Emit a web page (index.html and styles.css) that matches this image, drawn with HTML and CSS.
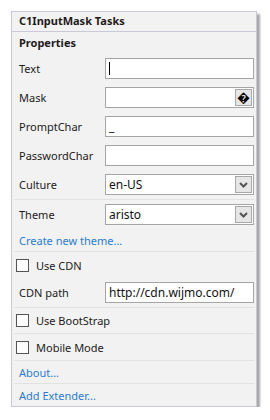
FILE: index.html
```html
<!DOCTYPE html>
<html>
<head>
<meta charset="utf-8">
<link rel="stylesheet" href="styles.css">
</head>
<body>
<div class="panel">
  <div class="header">C1InputMask Tasks</div>
  <div class="section-title">Properties</div>
  <div class="row field">
    <span class="label">Text</span>
    <div class="box"><span class="caret"></span></div>
  </div>
  <div class="row field">
    <span class="label">Mask</span>
    <div class="box"><span class="value"></span><span class="btn mask-btn">&#xFFFD;</span></div>
  </div>
  <div class="row field">
    <span class="label">PromptChar</span>
    <div class="box"><span class="value">_</span></div>
  </div>
  <div class="row field">
    <span class="label">PasswordChar</span>
    <div class="box"></div>
  </div>
  <div class="row field sep">
    <span class="label">Culture</span>
    <div class="box"><span class="value">en-US</span><span class="btn drop"><svg width="9" height="6" viewBox="0 0 9 6"><path d="M1 1 L4.5 4.5 L8 1" fill="none" stroke="#555" stroke-width="2"/></svg></span></div>
  </div>
  <div class="row field">
    <span class="label">Theme</span>
    <div class="box"><span class="value">aristo</span><span class="btn drop"><svg width="9" height="6" viewBox="0 0 9 6"><path d="M1 1 L4.5 4.5 L8 1" fill="none" stroke="#555" stroke-width="2"/></svg></span></div>
  </div>
  <div class="row link-row sep"><a class="link">Create new theme...</a></div>
  <div class="row check-row h26"><span class="check"></span><span class="label">Use CDN</span></div>
  <div class="row field sep">
    <span class="label">CDN path</span>
    <div class="box"><span class="value">http://cdn.wijmo.com/</span></div>
  </div>
  <div class="row check-row h25 sep"><span class="check"></span><span class="label">Use BootStrap</span></div>
  <div class="row check-row h26 sep"><span class="check"></span><span class="label">Mobile Mode</span></div>
  <div class="row link-row sep"><a class="link">About...</a></div>
  <div class="row link-row"><a class="link">Add Extender...</a></div>
</div>
</body>
</html>
```

FILE: styles.css
```css
html, body {
  margin: 0;
  padding: 0;
  background: #ffffff;
}
body {
  font-family: "Noto Sans", "Open Sans", sans-serif;
  font-size: 11px;
  color: #221a1a;
}
.panel {
  margin: 11px 0 0 11px;
  width: 244px;
  border: 1px solid #c9c9d9;
  background: #f2f2f2;
  box-shadow: 3px 3px 2px rgba(0, 0, 0, 0.35);
  display: flex;
  flex-direction: column;
}
.header {
  height: 19px;
  line-height: 18px;
  padding-left: 7px;
  font-weight: bold;
  border-bottom: 1px solid #c9c9d9;
}
.section-title {
  height: 22px;
  line-height: 22px;
  padding-left: 7px;
  font-weight: bold;
}
.row {
  display: flex;
  align-items: center;
  margin: 0 2px;
}
.field {
  height: 29px;
}
.sep {
  border-bottom: 1px solid #e2e2e2;
}
.label {
  padding-left: 5px;
  white-space: nowrap;
}
.field .label {
  width: 86px;
  flex: none;
}
.box {
  position: relative;
  width: 149px;
  height: 19px;
  border: 1px solid #a5a5a5;
  background: #ffffff;
  display: flex;
  align-items: center;
}
.value {
  padding-left: 3px;
  flex: 1;
  white-space: nowrap;
  color: #111;
  font-size: 12px;
}
.caret {
  width: 1px;
  height: 13px;
  background: #000;
  margin-left: 3px;
}
.btn {
  width: 15px;
  height: 15px;
  margin-right: 1px;
  border: 1px solid #a8a8a8;
  background: #e6e6e6;
  display: flex;
  align-items: center;
  justify-content: center;
  flex: none;
}
.mask-btn {
  font-size: 13px;
  line-height: 1;
  color: #000;
}
.drop svg {
  display: block;
}
.link-row {
  height: 22px;
}
.link {
  padding-left: 5px;
  color: #2b7bd3;
  cursor: pointer;
}
.check-row.h26 { height: 26px; }
.check-row.h25 { height: 25px; }
.check {
  width: 11px;
  height: 11px;
  border: 1px solid #555;
  background: #fff;
  margin-left: 2px;
  flex: none;
}
.check + .label {
  padding-left: 7px;
}
```
